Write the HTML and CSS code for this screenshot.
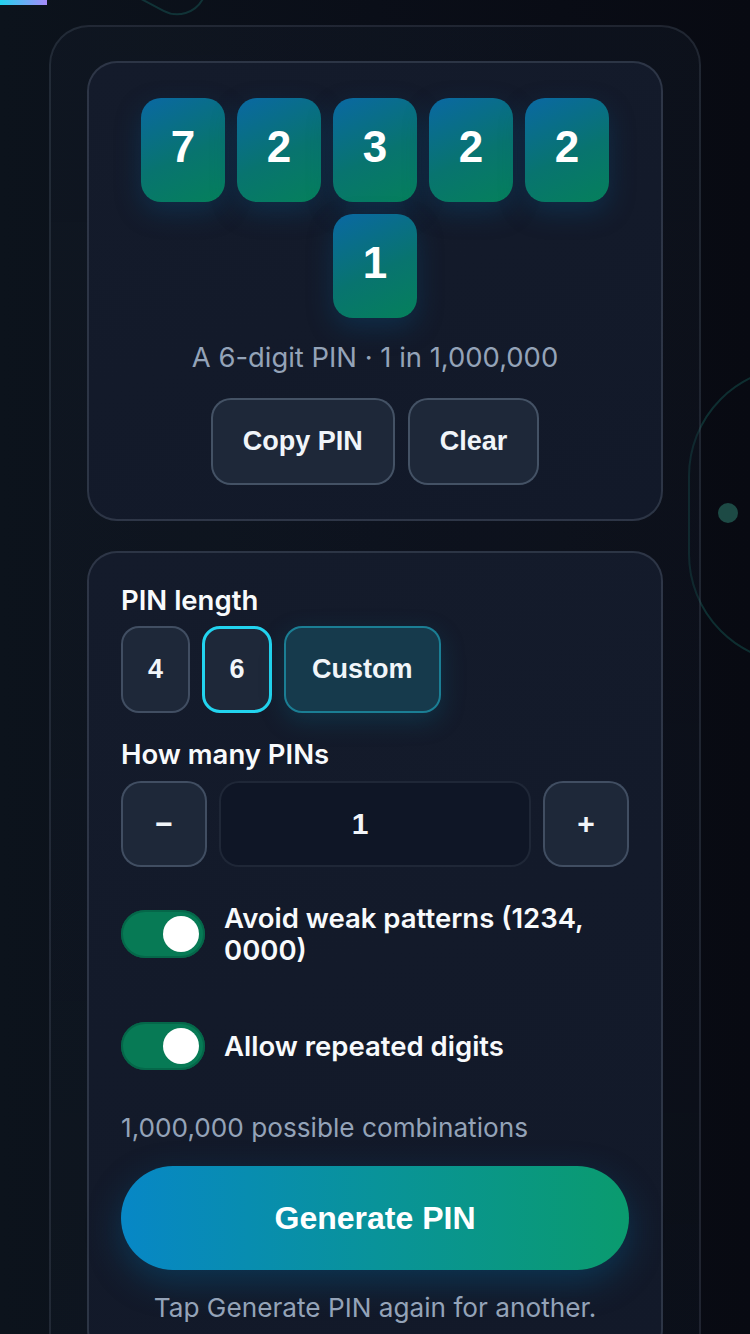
FILE: index.html
```html
<!DOCTYPE html>
<html lang="en">
<head>
<meta charset="utf-8">
<meta name="viewport" content="width=750">
<title>PIN Generator</title>
<link rel="stylesheet" href="styles.css">
</head>
<body>
<div class="bar"></div>
<div class="deco deco-top"></div>
<div class="deco deco-ring"></div>
<div class="deco deco-dot"></div>
<main class="page">
  <section class="shell">
    <div class="card result">
      <div class="digits">
        <span class="digit">7</span>
        <span class="digit">2</span>
        <span class="digit">3</span>
        <span class="digit">2</span>
        <span class="digit">2</span>
        <span class="digit">1</span>
      </div>
      <p class="meta">A 6-digit PIN · 1 in 1,000,000</p>
      <div class="actions">
        <button class="btn">Copy PIN</button>
        <button class="btn">Clear</button>
      </div>
    </div>
    <div class="card settings">
      <div class="label">PIN length</div>
      <div class="seg">
        <button class="chip">4</button>
        <button class="chip active">6</button>
        <button class="chip custom">Custom</button>
      </div>
      <div class="label label-gap">How many PINs</div>
      <div class="stepper">
        <button class="step">−</button>
        <div class="count">1</div>
        <button class="step">+</button>
      </div>
      <div class="toggles">
        <div class="row">
          <span class="toggle on"><span class="knob"></span></span>
          <span class="row-text">Avoid weak patterns (1234, 0000)</span>
        </div>
        <div class="row">
          <span class="toggle on"><span class="knob"></span></span>
          <span class="row-text">Allow repeated digits</span>
        </div>
      </div>
      <p class="hint">1,000,000 possible combinations</p>
      <button class="generate">Generate PIN</button>
      <p class="note">Tap Generate PIN again for another.</p>
    </div>
  </section>
</main>
</body>
</html>
```
FILE: styles.css
```css
html, body {
  margin: 0;
  height: 1334px;
  overflow: hidden;
}
body {
  position: relative;
  background: linear-gradient(90deg, #0c131c 0%, #0a0e18 50%, #080a12 100%);
  font-family: Inter, "Noto Sans", sans-serif;
  color: #f1f5f9;
}
.bar {
  position: absolute;
  left: 0;
  top: 0;
  width: 47px;
  height: 5px;
  background: linear-gradient(90deg, #22d3ee, #a78bfa);
}
.deco { position: absolute; pointer-events: none; }
.deco-top {
  left: 126px;
  top: -80px;
  width: 86px;
  height: 86px;
  border: 2px solid rgba(45, 212, 191, 0.18);
  border-radius: 30px;
  transform: rotate(28deg);
}
.deco-ring {
  left: 688px;
  top: 366px;
  width: 220px;
  height: 294px;
  border: 2px solid rgba(45, 212, 191, 0.18);
  border-radius: 110px;
}
.deco-dot {
  left: 718px;
  top: 503px;
  width: 20px;
  height: 20px;
  border-radius: 50%;
  background: #1d4a45;
}
.page {
  position: relative;
  padding: 25px 49px 0;
}
.shell {
  border: 2px solid rgba(148, 163, 184, 0.15);
  border-radius: 40px;
  padding: 34px 36px 60px;
  background: linear-gradient(180deg, rgba(22, 30, 44, 0.35), rgba(22, 30, 44, 0.25));
  display: flex;
  flex-direction: column;
  gap: 30px;
}
.card {
  border: 2px solid rgba(148, 163, 184, 0.2);
  border-radius: 30px;
  background: linear-gradient(160deg, #141b2b, #121929);
  padding: 35px 32px 34px;
}
.digits {
  display: flex;
  flex-wrap: wrap;
  justify-content: center;
  gap: 12px;
}
.digit {
  box-sizing: border-box;
  width: 84px;
  height: 104px;
  padding-bottom: 6px;
  border-radius: 20px;
  display: flex;
  align-items: center;
  justify-content: center;
  font: 700 44px "Liberation Sans", Arial, sans-serif;
  color: #ffffff;
  background: linear-gradient(155deg, #0a68a3 0%, #08746f 55%, #05805b 100%);
  box-shadow: 0 10px 26px rgba(8, 80, 130, 0.35);
}
.meta {
  margin: 24px 0 0;
  text-align: center;
  font-size: 27.4px;
  line-height: 31px;
  color: #94a3b8;
}
.actions {
  display: flex;
  justify-content: center;
  gap: 13px;
  margin-top: 25px;
}
button {
  font: 700 27px "Liberation Sans", Arial, sans-serif;
  color: #f1f5f9;
  cursor: pointer;
}
.btn {
  height: 87px;
  padding: 0 30px;
  border: 2px solid rgba(100, 116, 139, 0.55);
  border-radius: 20px;
  background: #1e2839;
}
.settings {
  padding-top: 32px;
}
.label {
  font-size: 27.5px;
  font-weight: 600;
  line-height: 30px;
  color: #f8fafc;
}
.label-gap { margin-top: 26px; }
.seg {
  display: flex;
  gap: 12px;
  margin-top: 11px;
}
.chip {
  height: 87px;
  padding: 0 25px;
  border: 2px solid rgba(100, 116, 139, 0.5);
  border-radius: 18px;
  background: #1e2839;
}
.chip.active {
  padding: 0 24.5px;
  border: 3px solid #22d3ee;
}
.chip.custom {
  padding: 0 26px;
  background: #163a4c;
  border-color: rgba(34, 211, 238, 0.45);
  box-shadow: 0 8px 24px rgba(6, 120, 150, 0.25);
}
.stepper {
  display: flex;
  gap: 12px;
  margin-top: 12px;
  height: 86px;
}
.step {
  width: 86px;
  height: 86px;
  border: 2px solid rgba(100, 116, 139, 0.5);
  border-radius: 20px;
  background: #1e2839;
  font-size: 30px;
}
.count {
  flex: 1;
  display: flex;
  align-items: center;
  justify-content: center;
  padding-right: 30px;
  border: 2px solid rgba(148, 163, 184, 0.12);
  border-radius: 20px;
  background: #0f1626;
  font: 700 30px "Liberation Sans", Arial, sans-serif;
}
.toggles {
  display: flex;
  flex-direction: column;
  gap: 56px;
  margin-top: 35px;
}
.row {
  display: flex;
  align-items: center;
  gap: 19px;
}
.toggle {
  position: relative;
  flex-shrink: 0;
  width: 84px;
  height: 48px;
  border-radius: 24px;
  background: #077a55;
  box-shadow: inset 0 0 0 2px rgba(4, 95, 68, 0.7);
}
.knob {
  position: absolute;
  right: 6px;
  top: 6px;
  width: 36px;
  height: 36px;
  border-radius: 50%;
  background: #ffffff;
}
.row-text {
  font-size: 27.5px;
  font-weight: 600;
  line-height: 32px;
  color: #f8fafc;
}
.hint {
  margin: 42px 0 0;
  font-size: 26.2px;
  line-height: 31px;
  color: #94a3b8;
}
.generate {
  display: block;
  width: 100%;
  height: 104px;
  margin-top: 23px;
  border: 0;
  border-radius: 52px;
  background: linear-gradient(90deg, #0787c6 0%, #09939a 50%, #0a9b6e 100%);
  color: #ffffff;
  font-size: 32px;
  box-shadow: 0 12px 34px rgba(3, 105, 161, 0.35);
}
.note {
  margin: 22px 0 0;
  text-align: center;
  font-size: 26.2px;
  line-height: 31px;
  color: #94a3b8;
}
```
